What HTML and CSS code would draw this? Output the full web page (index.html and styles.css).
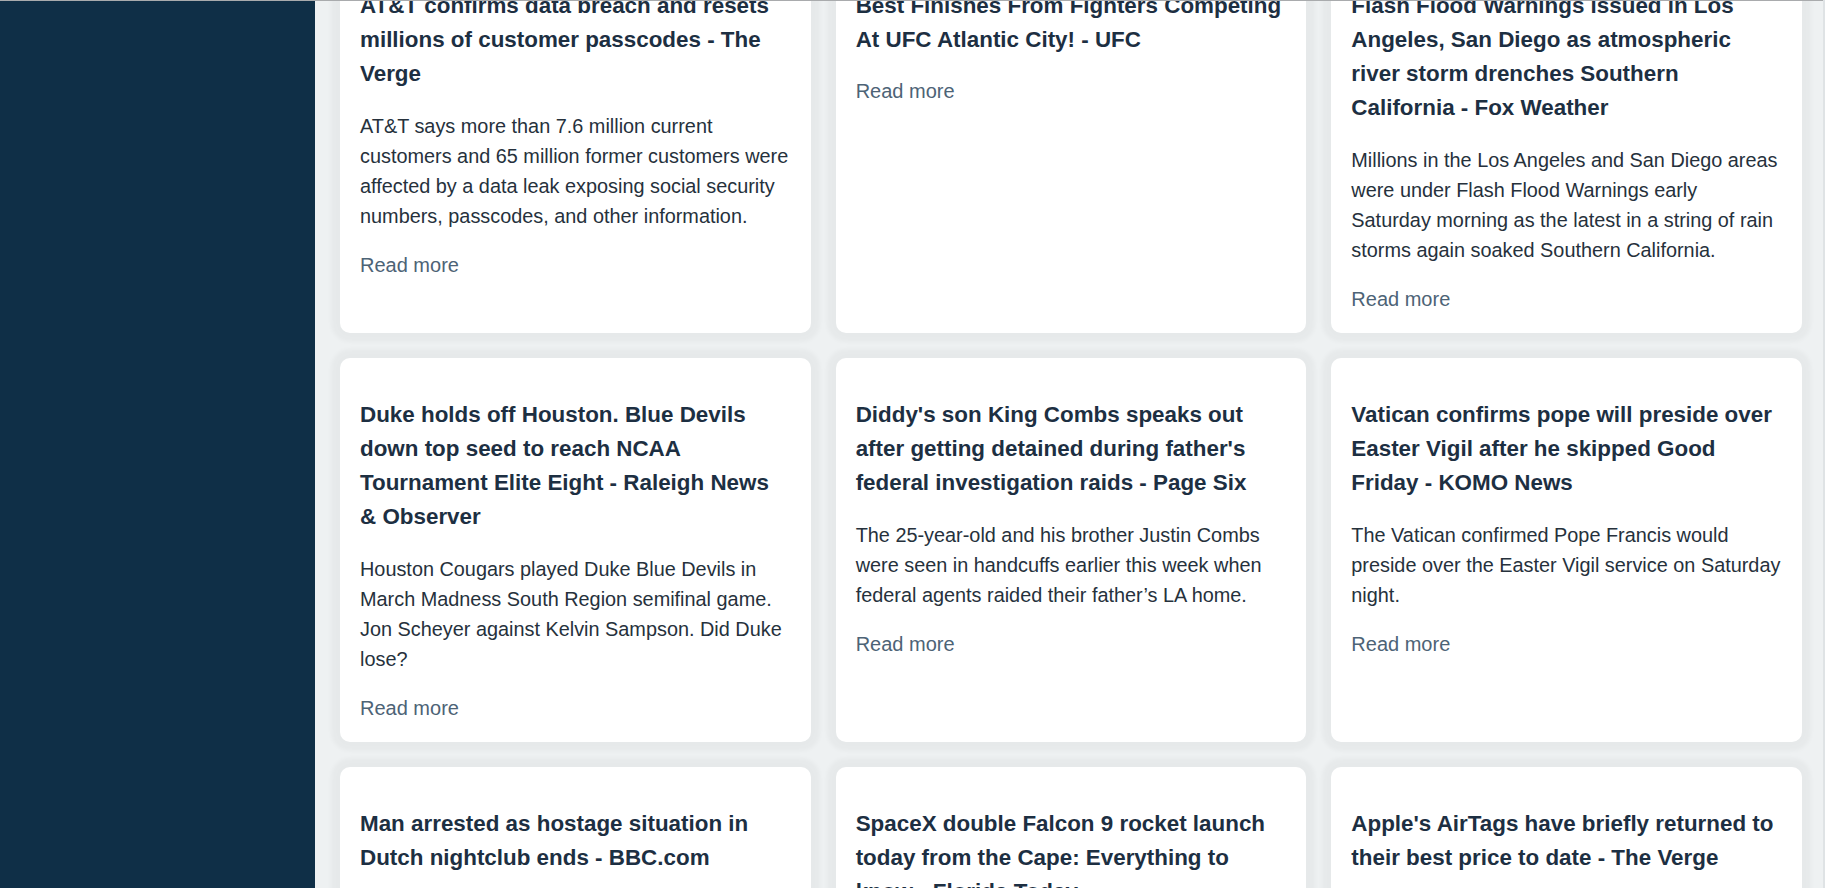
FILE: index.html
```html
<!DOCTYPE html>
<html lang="en">
<head>
<meta charset="utf-8">
<title>News Feed</title>
<link rel="stylesheet" href="styles.css">
</head>
<body>
<div class="layout">
  <aside class="sidebar"></aside>
  <main class="main">
    <section class="feed">
      <article class="card">
        <h3 class="card-title">AT&amp;T confirms data breach and resets millions of customer passcodes - The Verge</h3>
        <p class="card-text">AT&amp;T says more than 7.6 million current customers and 65 million former customers were affected by a data leak exposing social security numbers, passcodes, and other information.</p>
        <a class="card-link" href="#">Read more</a>
      </article>
      <article class="card">
        <h3 class="card-title">Best Finishes From Fighters Competing At UFC Atlantic City! - UFC</h3>
        <p class="card-text"></p>
        <a class="card-link" href="#">Read more</a>
      </article>
      <article class="card">
        <h3 class="card-title">Flash Flood Warnings issued in Los Angeles, San Diego as atmospheric river storm drenches Southern California - Fox Weather</h3>
        <p class="card-text">Millions in the Los Angeles and San Diego areas were under Flash Flood Warnings early Saturday morning as the latest in a string of rain storms again soaked Southern California.</p>
        <a class="card-link" href="#">Read more</a>
      </article>
      <article class="card">
        <h3 class="card-title">Duke holds off Houston. Blue Devils down top seed to reach NCAA Tournament Elite Eight - Raleigh News &amp; Observer</h3>
        <p class="card-text">Houston Cougars played Duke Blue Devils in March Madness South Region semifinal game. Jon Scheyer against Kelvin Sampson. Did Duke lose?</p>
        <a class="card-link" href="#">Read more</a>
      </article>
      <article class="card">
        <h3 class="card-title">Diddy's son King Combs speaks out after getting detained during father's federal investigation raids - Page Six</h3>
        <p class="card-text">The 25-year-old and his brother Justin Combs were seen in handcuffs earlier this week when federal agents raided their father’s LA home.</p>
        <a class="card-link" href="#">Read more</a>
      </article>
      <article class="card">
        <h3 class="card-title">Vatican confirms pope will preside over Easter Vigil after he skipped Good Friday - KOMO News</h3>
        <p class="card-text">The Vatican confirmed Pope Francis would preside over the Easter Vigil service on Saturday night.</p>
        <a class="card-link" href="#">Read more</a>
      </article>
      <article class="card">
        <h3 class="card-title">Man arrested as hostage situation in Dutch nightclub ends - BBC.com</h3>
        <p class="card-text">A man has been arrested after a hostage situation at a nightclub in the Dutch town of Ede came to an end.</p>
        <a class="card-link" href="#">Read more</a>
      </article>
      <article class="card">
        <h3 class="card-title">SpaceX double Falcon 9 rocket launch today from the Cape: Everything to know - Florida Today</h3>
        <p class="card-text">SpaceX is planning two Falcon 9 launches from Florida's Space Coast this weekend.</p>
        <a class="card-link" href="#">Read more</a>
      </article>
      <article class="card">
        <h3 class="card-title">Apple's AirTags have briefly returned to their best price to date - The Verge</h3>
        <p class="card-text">Apple's tracking accessories are on sale at several retailers.</p>
        <a class="card-link" href="#">Read more</a>
      </article>
    </section>
  </main>
</div>
</body>
</html>
```

FILE: styles.css
```css
html, body {
  margin: 0;
  padding: 0;
}

body {
  background: #eef1f2;
  font-family: "Liberation Sans", Arial, sans-serif;
  color: #25323f;
  overflow: hidden;
}

body::before {
  content: "";
  position: fixed;
  top: 0;
  left: 0;
  right: 0;
  height: 1px;
  background: #a9abad;
  z-index: 10;
}

body::after {
  content: "";
  position: fixed;
  top: 0;
  bottom: 0;
  right: 0;
  width: 2px;
  background: #dfe3e5;
  z-index: 10;
}

.layout {
  display: flex;
  min-height: 100vh;
}

.sidebar {
  flex: 0 0 315px;
  background: #0f2f47;
}

.main {
  flex: 1;
  min-width: 0;
  padding: 0 23px 25px 25px;
}

.feed {
  display: grid;
  grid-template-columns: repeat(3, minmax(0, 1fr));
  gap: 25px;
  margin-top: -51px;
}

.card {
  background: #ffffff;
  border-radius: 10px;
  padding: 20px;
  box-shadow: 0 0 4px 9px rgba(0, 0, 0, 0.032);
}

.card-title {
  margin: 20px 0;
  font-size: 22.4px;
  line-height: 34px;
  font-weight: 700;
  color: #1d2f42;
}

.card-text {
  margin: 20px 0;
  font-size: 19.87px;
  line-height: 30px;
  color: #26313c;
}

.card-link {
  display: block;
  font-size: 20px;
  line-height: 28px;
  color: #4d6376;
  text-decoration: none;
}
```
